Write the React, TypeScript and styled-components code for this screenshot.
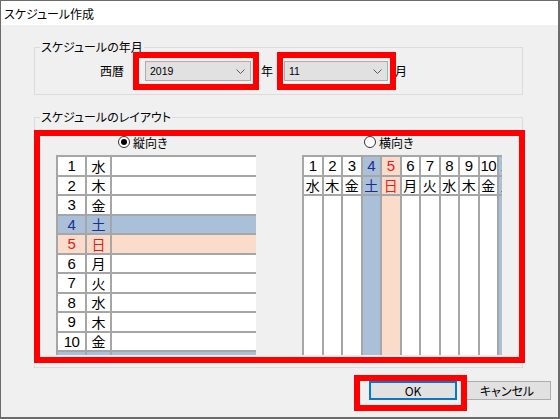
import React from "react";
import styled, { createGlobalStyle } from "styled-components";

type Kind = "normal" | "sat" | "sun";

const GlobalStyle = createGlobalStyle`
  html, body {
    margin: 0;
    padding: 0;
    background: #ffffff;
  }
  body {
    font-family: "Noto Sans CJK JP", "Noto Sans", sans-serif;
    font-feature-settings: "palt" 1;
    color: #000;
  }
`;

const Window = styled.div`
  position: relative;
  width: 560px;
  height: 419px;
  box-sizing: border-box;
  border: 1px solid #6b6b6b;
  border-right-width: 2px;
  border-bottom-width: 2px;
  background: #f0f0f0;
  display: flex;
  flex-direction: column;
`;

const TitleBar = styled.div`
  height: 24px;
  background: #ffffff;
  display: flex;
  align-items: center;
  padding-left: 3px;
  font-size: 12px;
`;

const Body = styled.div`
  display: flex;
  flex-direction: column;
  padding-left: 33px;
`;

const Group = styled.fieldset<{ $top: number }>`
  margin: ${(p) => p.$top}px 0 0 0;
  padding: 0;
  width: 489px;
  box-sizing: border-box;
  border: 1px solid #dcdcdc;
  min-inline-size: 0;
`;

const Legend = styled.legend`
  margin-left: 5px;
  padding: 0 1px;
  font-size: 12px;
  line-height: 16px;
`;

const DateRow = styled.div`
  display: flex;
  align-items: center;
  padding: 6px 0 13px 65px;
  font-size: 12px;
`;

const Unit = styled.span<{ $ml: number }>`
  margin-left: ${(p) => p.$ml}px;
  line-height: 16px;
`;

const Select = styled.div<{ $w: number; $ml: number }>`
  width: ${(p) => p.$w}px;
  height: 20px;
  margin-left: ${(p) => p.$ml}px;
  box-sizing: border-box;
  border: 1px solid #adadad;
  background: #e1e1e1;
  display: flex;
  align-items: center;
  justify-content: space-between;
  padding: 0 5px 0 4px;
  font-family: "Liberation Sans", Arial, sans-serif;
  font-size: 10.5px;
`;

const LayoutArea = styled.div`
  display: flex;
  gap: 46px;
  padding: 9px 0 12px 21px;
`;

const Column = styled.div`
  width: 200px;
  display: flex;
  flex-direction: column;
  gap: 5px;
`;

const RadioLabel = styled.label`
  display: flex;
  align-items: center;
  gap: 3px;
  height: 16px;
  margin-left: 62px;
  font-size: 12px;
`;

const RadioDot = styled.span<{ $checked: boolean }>`
  width: 12px;
  height: 12px;
  box-sizing: border-box;
  border: 1px solid #333;
  border-radius: 50%;
  background: #fff;
  display: flex;
  align-items: center;
  justify-content: center;
  &::after {
    content: "";
    width: 6px;
    height: 6px;
    border-radius: 50%;
    background: ${(p) => (p.$checked ? "#000" : "transparent")};
  }
`;

const Viewport = styled.div`
  width: 200px;
  height: 200px;
  overflow: hidden;
`;

const VGrid = styled.div`
  display: grid;
  grid-template-columns: 27px 23px 220px;
  grid-auto-rows: 17.5px;
  gap: 2px;
  padding: 2px 0 0 2px;
  background: #a6a6a6;
  width: max-content;
`;

const HGrid = styled.div`
  display: grid;
  grid-template-rows: 17.5px 17.5px 170px;
  grid-auto-flow: column;
  grid-auto-columns: 17.5px;
  gap: 2px;
  padding: 2px 0 0 2px;
  background: #a6a6a6;
  width: max-content;
`;

const bg: Record<Kind, string> = { normal: "#ffffff", sat: "#aabfd8", sun: "#fbdbc9" };
const fg: Record<Kind, string> = { normal: "#000000", sat: "#1c2c90", sun: "#e3201b" };

const Cell = styled.div<{ $kind: Kind }>`
  background: ${(p) => bg[p.$kind]};
  color: ${(p) => fg[p.$kind]};
  display: flex;
  align-items: center;
  justify-content: center;
  line-height: 1;
  overflow: hidden;
`;

const NumCell = styled(Cell)`
  font-family: "Liberation Sans", Arial, sans-serif;
  font-size: 15px;
  letter-spacing: -0.5px;
`;

const DayCell = styled(Cell)`
  font-family: "Noto Sans CJK JP", sans-serif;
  font-size: 14px;
`;

const ButtonRow = styled.div`
  display: flex;
  justify-content: flex-end;
  gap: 6px;
  margin-top: 13px;
  padding-right: 7px;
`;

const Button = styled.button<{ $primary?: boolean }>`
  width: 88px;
  height: 19px;
  box-sizing: border-box;
  padding: 0;
  background: #e1e1e1;
  border: ${(p) => (p.$primary ? "2px solid #0078d7" : "1px solid #adadad")};
  font-family: "Noto Sans CJK JP", sans-serif;
  font-feature-settings: "palt" 1;
  font-size: 12px;
  line-height: 1;
  color: #000;
`;

const Mark = styled.div<{ $x: number; $y: number; $w: number; $h: number }>`
  position: absolute;
  left: ${(p) => p.$x - 1}px;
  top: ${(p) => p.$y - 1}px;
  width: ${(p) => p.$w}px;
  height: ${(p) => p.$h}px;
  box-sizing: border-box;
  border: 6px solid #ff0000;
  pointer-events: none;
`;

const Chevron = () => (
  <svg width="9" height="5" viewBox="0 0 9 5">
    <path d="M0.5 0.5 L4.5 4.5 L8.5 0.5" fill="none" stroke="#5a5a5a" strokeWidth="1" />
  </svg>
);

const weekdays = ["水", "木", "金", "土", "日", "月", "火", "水", "木", "金", "土"];
const days = weekdays.map((w, i) => ({
  n: i + 1,
  w,
  kind: (w === "土" ? "sat" : w === "日" ? "sun" : "normal") as Kind,
}));

export default function App() {
  return (
    <>
      <GlobalStyle />
      <Window>
        <TitleBar>スケジュール作成</TitleBar>
        <Body>
          <Group $top={14}>
            <Legend>スケジュールの年月</Legend>
            <DateRow>
              <Unit $ml={0}>西暦</Unit>
              <Select $w={106} $ml={21}>
                <span>2019</span>
                <Chevron />
              </Select>
              <Unit $ml={10}>年</Unit>
              <Select $w={104} $ml={11}>
                <span>11</span>
                <Chevron />
              </Select>
              <Unit $ml={7}>月</Unit>
            </DateRow>
          </Group>

          <Group $top={14}>
            <Legend>スケジュールのレイアウト</Legend>
            <LayoutArea>
              <Column>
                <RadioLabel>
                  <RadioDot $checked />
                  縦向き
                </RadioLabel>
                <Viewport>
                  <VGrid>
                    {days.map((d) => (
                      <React.Fragment key={d.n}>
                        <NumCell $kind={d.kind}>{d.n}</NumCell>
                        <DayCell $kind={d.kind}>{d.w}</DayCell>
                        <Cell $kind={d.kind} />
                      </React.Fragment>
                    ))}
                  </VGrid>
                </Viewport>
              </Column>
              <Column>
                <RadioLabel>
                  <RadioDot $checked={false} />
                  横向き
                </RadioLabel>
                <Viewport>
                  <HGrid>
                    {days.map((d) => (
                      <React.Fragment key={d.n}>
                        <NumCell $kind={d.kind}>{d.n}</NumCell>
                        <DayCell $kind={d.kind}>{d.w}</DayCell>
                        <Cell $kind={d.kind} />
                      </React.Fragment>
                    ))}
                  </HGrid>
                </Viewport>
              </Column>
            </LayoutArea>
          </Group>

          <ButtonRow>
            <Button $primary>OK</Button>
            <Button>キャンセル</Button>
          </ButtonRow>
        </Body>

        <Mark $x={133} $y={52} $w={126} $h={38} />
        <Mark $x={277} $y={52} $w={119} $h={38} />
        <Mark $x={34} $y={130} $w={491} $h={233} />
        <Mark $x={354} $y={375} $w={113} $h={36} />
      </Window>
    </>
  );
}
